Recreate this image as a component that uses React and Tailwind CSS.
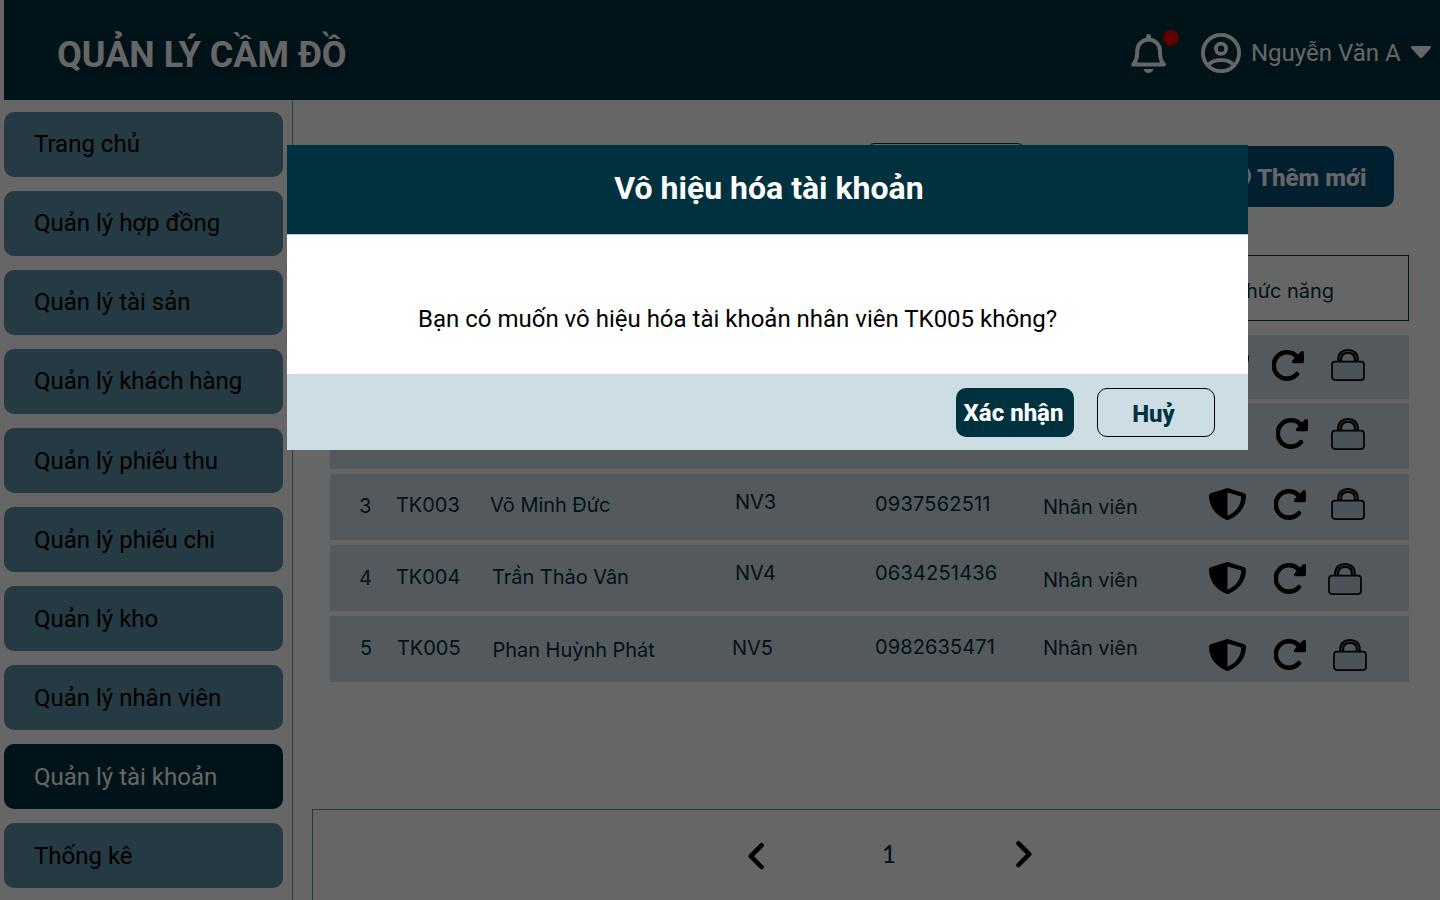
const MENU = [
  "Trang chủ",
  "Quản lý hợp đồng",
  "Quản lý tài sản",
  "Quản lý khách hàng",
  "Quản lý phiếu thu",
  "Quản lý phiếu chi",
  "Quản lý kho",
  "Quản lý nhân viên",
  "Quản lý tài khoản",
  "Thống kê",
];
const ACTIVE = "Quản lý tài khoản";

const ROWS = [
  {
    box: "h-16",
    cells: [],
    icons: ["ml-[3px] mt-3.5", "-ml-0.5 mt-[15px]", "ml-0 mt-3.5"],
  },
  {
    box: "h-[66px] mt-1",
    cells: [],
    icons: ["mt-[15px]", "ml-0.5 mt-[15px]", "mt-[15px]"],
  },
  {
    box: "h-[66px] mt-[5px]",
    cells: [
      ["3", "pt-5"],
      ["TK003", "pt-[19px]"],
      ["Võ Minh Đức", "pt-[19px]"],
      ["NV3", "pt-4"],
      ["0937562511", "pt-[18px] tracking-[0.2px]"],
      ["Nhân viên", "pt-[21px]"],
    ],
    icons: ["mt-3.5", "mt-[15px]", "mt-3.5"],
  },
  {
    box: "h-[66px] mt-[5px]",
    cells: [
      ["4", "pt-[21px]"],
      ["TK004", "pt-5"],
      ["Trần Thảo Vân", "pl-0.5 pt-5"],
      ["NV4", "pt-4"],
      ["0634251436", "pt-4 tracking-[0.2px]"],
      ["Nhân viên", "pt-[23px]"],
    ],
    icons: ["mt-[17px]", "mt-[18px]", "-ml-[3px] mt-[18px]"],
  },
  {
    box: "h-[66px] mt-[5px]",
    cells: [
      ["5", "pl-px pt-5"],
      ["TK005", "pl-px pt-5"],
      ["Phan Huỳnh Phát", "pl-[2.5px] pt-[22px]"],
      ["NV5", "-ml-[3px] pt-5"],
      ["0982635471", "pt-[19px] tracking-[0.1px]"],
      ["Nhân viên", "pt-5"],
    ],
    icons: ["mt-[23px]", "mt-[23px]", "ml-0.5 mt-[23px]"],
  },
];

function Bell() {
  return (
    <svg className="h-11 w-9" viewBox="0 0 36 44" fill="none">
      <path
        d="M3.200 33.600C5.800 30.500 7.200 27.500 7.200 22V20A11.400 11.400 0 0 1 30 20V22C30 27.500 31.200 30.500 33.900 33.600Z"
        stroke="white"
        strokeWidth="4"
        strokeLinejoin="round"
      />
      <path d="M18.600 5.300V8" stroke="white" strokeWidth="4.800" strokeLinecap="round" />
      <path d="M13.600 38H23.400A5 5 0 0 1 13.600 38Z" fill="white" />
    </svg>
  );
}

function Person() {
  return (
    <svg className="size-10" viewBox="0 0 40 40" fill="none" stroke="white" strokeWidth="3.800">
      <circle cx="20" cy="20" r="18.100" />
      <circle cx="20" cy="15.700" r="5.100" />
      <path d="M7.500 32C10 29 14 27.200 20 27.200S30 29 32.500 32" />
    </svg>
  );
}

function Shield({ className }) {
  return (
    <svg className={"h-8 w-[37px] " + className} viewBox="0 0 37 32">
      <path
        fillRule="evenodd"
        d="M17.600 .2a2.400 2.400 0 0 1 1.800 0L35.300 5.200A2.600 2.600 0 0 1 37 7.600C37.100 18 31 27 19.800 31.700a3.300 3.300 0 0 1-2.600 0C6 27 -.1 18 0 7.600A2.600 2.600 0 0 1 1.700 5.200ZM18.500 4.400V27.700C27.500 24 32 17 32.300 8.600Z"
      />
    </svg>
  );
}

function Refresh({ className }) {
  return (
    <svg className={"h-[31px] w-8 " + className} viewBox="0 0 32 31">
      <path d="M24.800 24.300A13.200 13.200 0 1 1 24.500 6.300" fill="none" stroke="black" strokeWidth="4.600" strokeLinecap="round" />
      <path d="M28.800 1.500Q32 -.2 32 3.200V11.300Q32 13.200 30.200 13.200H22Q18.500 13.200 20.800 10Z" />
    </svg>
  );
}

function Lock({ className }) {
  return (
    <svg className={"h-8 w-[34px] " + className} viewBox="0 0 34 32" fill="none" stroke="black">
      <path d="M8.700 13V10.500C8.700 5 12 2.500 17 2.500S25.300 5 25.300 10.500V13" strokeWidth="5" />
      <path d="M8.700 12V10.500C8.700 5 12 2.500 17 2.500S25.300 5 25.300 10.500V12" stroke="#8b9aa5" strokeWidth="1" />
      <rect x="1" y="12.700" width="32" height="18.400" rx="3" fill="#bccfdc" strokeWidth="1.700" />
    </svg>
  );
}

function Chevron({ className, d }) {
  return (
    <svg className={"h-7 w-[18px] " + className} viewBox="0 0 18 28" fill="none" stroke="black" strokeWidth="4.600" strokeLinecap="round" strokeLinejoin="round">
      <path d={d} />
    </svg>
  );
}

function Header() {
  return (
    <header className="ml-1 flex h-[100px] shrink-0 items-start bg-[#00303d] text-white">
      <h1 className="ml-[53px] mt-[34px] flex-1 text-[36px] leading-[42px] font-bold [text-shadow:0_4px_4px_rgba(0,0,0,0.25)]">
        QUẢN LÝ CẦM ĐỒ
      </h1>
      <div className="relative mt-[31px] mr-[35px]">
        <Bell />
        <span className="absolute -top-px left-[33px] size-4 rounded-full bg-[#f00000]" />
      </div>
      <div className="mt-[33px]">
        <Person />
      </div>
      <span className="mt-[39px] ml-2.5 w-[160px] text-2xl leading-7 whitespace-nowrap">Nguyễn Văn A</span>
      <svg className="mt-[46px] mr-[9px] h-3 w-5" viewBox="0 0 20 12" fill="white">
        <path d="M1.500 0H18.500Q21 .5 19.400 2.500L11.800 11Q10 12.800 8.200 11L.6 2.500Q-1 .5 1.500 0Z" />
      </svg>
    </header>
  );
}

function Sidebar() {
  return (
    <nav className="flex w-[293px] shrink-0 flex-col gap-[14.08px] border-r border-[#5c91a5] pt-[11.75px] pl-1">
      {MENU.map((m) => (
        <a
          key={m}
          className={
            "flex h-[65px] w-[279px] shrink-0 items-center rounded-[10px] pl-[30px] text-2xl " +
            (m === ACTIVE ? "bg-[#00303d] text-white" : "bg-[#5c91a5] text-black")
          }
        >
          {m}
        </a>
      ))}
    </nav>
  );
}

function AccountTable() {
  return (
    <section className="mt-12 ml-[37px] w-[1079px] font-['Inter',sans-serif] text-xl leading-6 tracking-[-0.04px] text-[#00303d]">
      <div className="flex h-[66px] justify-end border border-[#00303d] pt-[23px] pr-[74px]">Chức năng</div>
      <div className="mt-3.5">
        {ROWS.map((r, i) => (
          <div
            key={i}
            className={
              "grid grid-cols-[37px_94px_245px_140px_168px_166px_65px_57px_1fr] items-start bg-[#d2dfe8] pl-[29px] whitespace-nowrap " +
              r.box
            }
          >
            {r.cells.map(([text, place], j) => (
              <span key={j} className={place}>
                {text}
              </span>
            ))}
            <Shield className={"col-start-7 " + r.icons[0]} />
            <Refresh className={r.icons[1]} />
            <Lock className={r.icons[2]} />
          </div>
        ))}
      </div>
    </section>
  );
}

function Dialog() {
  return (
    <div className="absolute inset-0 flex items-start bg-black/60">
      <div role="dialog" className="mt-[145px] ml-[287px] flex h-[305px] w-[961px] flex-col bg-white">
        <h2 className="flex h-[89px] items-center justify-center pb-1 bg-[#00313e] pl-[3px] text-[32px] font-bold text-white">
          Vô hiệu hóa tài khoản
        </h2>
        <p className="flex-1 border-t border-[#bccfd6] pt-[70px] pl-[131px] text-2xl leading-7 text-black">
          Bạn có muốn vô hiệu hóa tài khoản nhân viên TK005 không?
        </p>
        <footer className="flex h-[76px] items-start justify-end gap-[23px] bg-[#cddde4] pt-3.5 pr-[33px] text-2xl font-extrabold">
          <button className="h-[49px] w-[118px] rounded-[10px] bg-[#00313e] pr-[3px] whitespace-nowrap text-white">Xác nhận</button>
          <button className="h-[49px] w-[118px] rounded-[10px] border border-black bg-[#cddde4] pt-0.5 pr-[5px] text-[#00313e]">Huỷ</button>
        </footer>
      </div>
    </div>
  );
}

export default function App() {
  return (
    <div className="relative flex h-[900px] w-[1440px] flex-col overflow-hidden bg-white font-['Roboto',sans-serif]">
      <Header />
      <div className="flex min-h-0 flex-1">
        <Sidebar />
        <main className="flex min-w-0 flex-1 flex-col">
          <div className="flex items-start justify-between pt-[43px] pr-[46px] pl-[572px]">
            <div className="h-[60px] w-[162px] rounded-[10px] border border-[#00303d]" />
            <button className="mt-[3px] flex h-[61px] w-[188px] items-center justify-end gap-1.5 rounded-[10px] bg-[#005278] pt-0.5 pr-[27.5px] text-2xl font-extrabold whitespace-nowrap text-white">
              <svg className="-mt-1 size-6" viewBox="0 0 24 24" fill="none" stroke="white" strokeWidth="2.500">
                <circle cx="12" cy="12" r="10.700" />
                <path d="M12 6v12M6 12h12" />
              </svg>
              Thêm mới
            </button>
          </div>
          <AccountTable />
          <div className="mt-[127px] ml-[19px] flex flex-1 items-start border-t border-l border-[#5c91a5]">
            <Chevron className="mt-8 ml-[434px]" d="M14.500 3.300L3.800 14.200L14.500 25" />
            <span className="mt-[30px] w-[248px] text-center font-['Lato',sans-serif] text-2xl leading-7 font-medium text-[#00303d]">1</span>
            <Chevron className="mt-[30px] ml-0.5" d="M3.500 3.300L14.200 14.200L3.500 25" />
          </div>
        </main>
      </div>
      <Dialog />
    </div>
  );
}
